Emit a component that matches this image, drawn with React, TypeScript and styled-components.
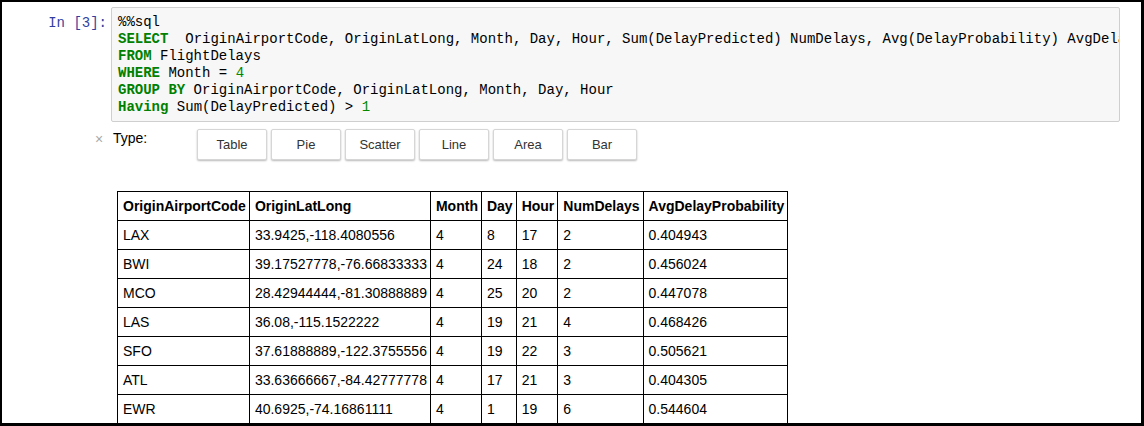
import React from "react";
import styled, { createGlobalStyle } from "styled-components";

const GlobalStyle = createGlobalStyle`
  html, body {
    margin: 0;
    padding: 0;
    background: #ffffff;
  }
  * {
    box-sizing: border-box;
  }
`;

const Frame = styled.div`
  width: 1144px;
  height: 426px;
  border-style: solid;
  border-color: #000;
  border-width: 2px 3px 3px 2px;
  background: #fff;
  overflow: hidden;
  font-family: "Liberation Sans", Arial, sans-serif;
`;

const CellRow = styled.div`
  display: flex;
  align-items: flex-start;
  padding: 5px 21px 0 0;
`;

const Prompt = styled.div`
  width: 105px;
  flex-shrink: 0;
  padding-top: 8px;
  text-align: right;
  font-family: "Liberation Mono", "Courier New", monospace;
  font-size: 14px;
  line-height: 17px;
  color: #303f9f;
`;

const InputArea = styled.div`
  flex: 1;
  margin-left: 4px;
  min-width: 0;
  border: 1px solid #cfcfcf;
  border-radius: 2px;
  background: #f7f7f7;
  padding: 6px 0 5px;
  overflow: hidden;
`;

const CodeLine = styled.pre`
  margin: 0;
  padding: 0 6px;
  white-space: pre;
  font-family: "Liberation Mono", "Courier New", monospace;
  font-size: 14px;
  line-height: 17px;
  color: #000;
`;

const Kw = styled.span`
  color: #008000;
  font-weight: bold;
`;

const Num = styled.span`
  color: #008800;
`;

const OutputArea = styled.div`
  padding-left: 93px;
`;

const WidgetRow = styled.div`
  display: flex;
  align-items: flex-start;
  padding-top: 7px;
`;

const CloseMark = styled.span`
  width: 18px;
  padding-top: 3px;
  font-size: 14px;
  line-height: 14px;
  color: #a9a9a9;
`;

const Label = styled.span`
  width: 84px;
  padding-top: 2px;
  font-size: 14px;
  line-height: 15px;
  color: #000;
`;

const ButtonGroup = styled.div`
  display: flex;
  gap: 4px;
`;

const TypeButton = styled.button`
  width: 70px;
  height: 31px;
  padding: 0;
  border: 1px solid #d6d6d6;
  border-radius: 2px;
  background: #fff;
  box-shadow: 0 1px 2px rgba(0, 0, 0, 0.28);
  font-family: "Liberation Sans", Arial, sans-serif;
  font-size: 13px;
  color: #333;
`;

const TableWrap = styled.div`
  padding: 31px 0 0 22px;
`;

const DataTable = styled.table`
  border-collapse: collapse;
  font-size: 14px;
  color: #000;
`;

const Cell = styled.td<{ $head?: boolean }>`
  border: 1px solid #000;
  padding: 6px 3px 5px 5px;
  line-height: 17px;
  text-align: left;
  white-space: nowrap;
  font-weight: ${(p) => (p.$head ? "bold" : "normal")};
`;

const headers = [
  "OriginAirportCode",
  "OriginLatLong",
  "Month",
  "Day",
  "Hour",
  "NumDelays",
  "AvgDelayProbability",
];

const rows = [
  ["LAX", "33.9425,-118.4080556", "4", "8", "17", "2", "0.404943"],
  ["BWI", "39.17527778,-76.66833333", "4", "24", "18", "2", "0.456024"],
  ["MCO", "28.42944444,-81.30888889", "4", "25", "20", "2", "0.447078"],
  ["LAS", "36.08,-115.1522222", "4", "19", "21", "4", "0.468426"],
  ["SFO", "37.61888889,-122.3755556", "4", "19", "22", "3", "0.505621"],
  ["ATL", "33.63666667,-84.42777778", "4", "17", "21", "3", "0.404305"],
  ["EWR", "40.6925,-74.16861111", "4", "1", "19", "6", "0.544604"],
];

const chartTypes = ["Table", "Pie", "Scatter", "Line", "Area", "Bar"];

export default function App() {
  return (
    <>
      <GlobalStyle />
      <Frame>
        <CellRow>
          <Prompt>In&nbsp;[3]:</Prompt>
          <InputArea>
            <CodeLine>%%sql</CodeLine>
            <CodeLine>
              <Kw>SELECT</Kw>  OriginAirportCode, OriginLatLong, Month, Day, Hour,
              Sum(DelayPredicted) NumDelays, Avg(DelayProbability) AvgDelayProbability
            </CodeLine>
            <CodeLine>
              <Kw>FROM</Kw> FlightDelays
            </CodeLine>
            <CodeLine>
              <Kw>WHERE</Kw> Month = <Num>4</Num>
            </CodeLine>
            <CodeLine>
              <Kw>GROUP BY</Kw> OriginAirportCode, OriginLatLong, Month, Day, Hour
            </CodeLine>
            <CodeLine>
              <Kw>Having</Kw> Sum(DelayPredicted) &gt; <Num>1</Num>
            </CodeLine>
          </InputArea>
        </CellRow>
        <OutputArea>
          <WidgetRow>
            <CloseMark>×</CloseMark>
            <Label>Type:</Label>
            <ButtonGroup>
              {chartTypes.map((t) => (
                <TypeButton key={t}>{t}</TypeButton>
              ))}
            </ButtonGroup>
          </WidgetRow>
          <TableWrap>
            <DataTable>
              <thead>
                <tr>
                  {headers.map((h) => (
                    <Cell as="th" $head key={h}>
                      {h}
                    </Cell>
                  ))}
                </tr>
              </thead>
              <tbody>
                {rows.map((r) => (
                  <tr key={r[0]}>
                    {r.map((v, i) => (
                      <Cell key={i}>{v}</Cell>
                    ))}
                  </tr>
                ))}
              </tbody>
            </DataTable>
          </TableWrap>
        </OutputArea>
      </Frame>
    </>
  );
}
